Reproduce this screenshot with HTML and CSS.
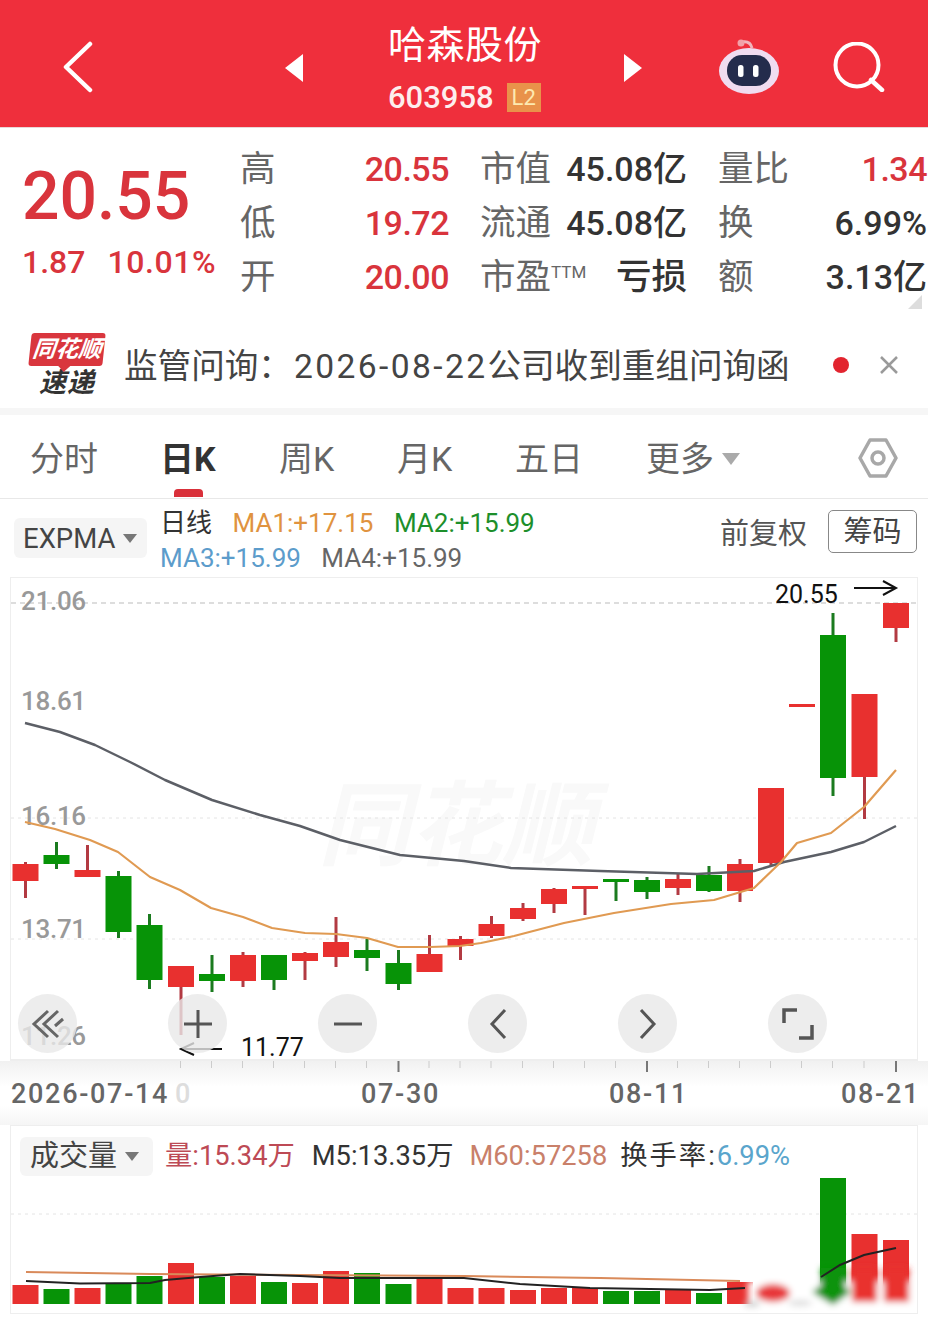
FILE: index.html
```html
<!DOCTYPE html>
<html lang="zh-CN">
<head>
    <meta charset="UTF-8">
    <meta name="viewport" content="width=device-width, initial-scale=1.0">
    <title>哈森股份 603958</title>
    <link rel="stylesheet" href="styles.css">
</head>
<body>
    <header class="topbar">
        <svg class="back" width="30" height="52" viewBox="0 0 30 52"><path d="M27 3 3 26l24 23" fill="none" stroke="#fff" stroke-width="4.500" stroke-linecap="round" stroke-linejoin="round"/></svg>
        <svg class="arrow-l" width="18" height="28" viewBox="0 0 18 28"><path d="M18 0v28L0 14z" fill="#fff"/></svg>
        <div class="stock">
            <div class="stock-name">哈森股份</div>
            <div class="stock-code">603958<span class="badge">L2</span></div>
        </div>
        <svg class="arrow-r" width="18" height="28" viewBox="0 0 18 28"><path d="M0 0v28l18-14z" fill="#fff"/></svg>
        <svg class="robot" width="62" height="56" viewBox="0 0 62 56">
            <path d="M24 3c6-1 9 2 10 6" fill="none" stroke="#f0b4bc" stroke-width="3"/>
            <circle cx="23" cy="4" r="3.500" fill="#f2a0a8"/>
            <ellipse cx="31" cy="32" rx="30" ry="23" fill="#f0dcf0"/>
            <rect x="9" y="16" width="44" height="31" rx="15" fill="#242c4c"/>
            <rect x="20" y="26" width="5.500" height="12" rx="2.500" fill="#fff"/>
            <rect x="35" y="26" width="5.500" height="12" rx="2.500" fill="#fff"/>
        </svg>
        <svg class="search" width="52" height="50" viewBox="0 0 52 50"><circle cx="24" cy="23" r="21.500" fill="none" stroke="#fff" stroke-width="4"/><path d="M38 38l11 10" stroke="#fff" stroke-width="4.500" stroke-linecap="round"/></svg>
    </header>

    <section class="quote">
        <div class="price-box">
            <div class="price">20.55</div>
            <div class="change"><span>1.87</span><span>10.01%</span></div>
        </div>
        <div class="stats">
            <div class="stat"><span class="label">高</span><span class="up">20.55</span></div>
            <div class="stat"><span class="label">市值</span><span>45.08亿</span></div>
            <div class="stat"><span class="label">量比</span><span class="up">1.34</span></div>
            <div class="stat"><span class="label">低</span><span class="up">19.72</span></div>
            <div class="stat"><span class="label">流通</span><span>45.08亿</span></div>
            <div class="stat"><span class="label">换</span><span>6.99%</span></div>
            <div class="stat"><span class="label">开</span><span class="up">20.00</span></div>
            <div class="stat"><span class="label">市盈<sup class="ttm">TTM</sup></span><span class="label-dark">亏损</span></div>
            <div class="stat"><span class="label">额</span><span>3.13亿</span></div>
        </div>
        <span class="corner"></span>
    </section>

    <section class="news">
        <div class="logo">
            <div class="logo-top">同花顺</div>
            <div class="logo-bottom">速递</div>
        </div>
        <div class="news-text">监管问询：<span class="news-date">2026-08-22</span>公司收到重组问询函</div>
        <span class="dot"></span>
        <svg class="close" width="20" height="20" viewBox="0 0 20 20"><path d="M2 2l16 16M18 2 2 18" stroke="#9a9a9a" stroke-width="2.500"/></svg>
    </section>

    <nav class="tabs">
        <span class="tab tab-first">分时</span>
        <span class="tab tab-active">日K</span>
        <span class="tab">周K</span>
        <span class="tab">月K</span>
        <span class="tab">五日</span>
        <span class="tab tab-more">更多<i class="caret caret-big"></i></span>
        <svg class="hex" width="40" height="44" viewBox="0 0 40 44"><path d="M12 4h16l10 18-10 18H12L2 22z" fill="none" stroke="#a8a8a8" stroke-width="3.500" stroke-linejoin="round"/><circle cx="20" cy="22" r="6" fill="none" stroke="#a8a8a8" stroke-width="3.500"/></svg>
    </nav>

    <section class="chart-head">
        <div class="select select-expma">EXPMA<i class="caret"></i></div>
        <div class="legend">
            <div class="legend-row"><span class="legend-title">日线</span><span class="c-orange">MA1:+17.15</span><span class="c-green">MA2:+15.99</span></div>
            <div class="legend-row"><span class="c-blue">MA3:+15.99</span><span class="c-gray">MA4:+15.99</span></div>
        </div>
        <span class="adjust">前复权</span>
        <span class="chips">筹码</span>
    </section>

    <section class="kline">
        <svg id="klineSvg" class="plot" width="906" height="482" viewBox="11 578 906 482">
            <text class="watermark" x="318" y="858">同花顺</text>
            <line class="grid-dash" x1="11" y1="603" x2="917" y2="603"/>
            <line class="grid-dot" x1="11" y1="818" x2="917" y2="818"/>
            <line class="grid-dot" x1="11" y1="939" x2="917" y2="939"/>
            <text class="axis-price" x="21" y="610">21.06</text>
            <text class="axis-price" x="21" y="710">18.61</text>
            <text class="axis-price" x="21" y="825">16.16</text>
            <text class="axis-price" x="21" y="938">13.71</text>
            <text class="axis-price" x="21" y="1045">11.26</text>
            <g id="candles"></g>
            <polyline class="line-gray" points="25,723 60,732 95,745 130,762 165,780 212,800 260,815 300,826 340,840 400,855 464,861 511,868 600,871 697,874 754,871 784,862 831,852 864,842 896,826"/>
            <polyline class="line-orange" points="25,822 55,829 90,840 118,852 150,877 180,890 211,908 243,917 272,928 305,933 336,934 367,938 398,947 430,947 460,946 481,943 514,936 564,923 614,913 671,904 714,900 754,888 781,862 797,843 831,833 864,807 896,770"/>
            <text class="note" x="775" y="603">20.55</text>
            <path class="note-arrow" d="M854 588h41M883 581l13 7-13 7"/>
            <text class="note" x="241" y="1056">11.77</text>
            <path class="note-arrow" d="M181 1049h41M194 1043l-13 6 13 6"/>
        </svg>
        <div class="tools">
            <span class="tool"><svg width="34" height="30" viewBox="0 0 34 30"><path d="M17 2 3 15l14 13M27 2 13 15l14 13M32 10 24 17" fill="none" stroke="#666" stroke-width="3"/></svg></span>
            <span class="tool"><svg width="30" height="30" viewBox="0 0 30 30"><path d="M1 15h28M15 1v28" stroke="#555" stroke-width="3"/></svg></span>
            <span class="tool"><svg width="30" height="30" viewBox="0 0 30 30"><path d="M1 15h28" stroke="#555" stroke-width="3"/></svg></span>
            <span class="tool"><svg width="18" height="32" viewBox="0 0 18 32"><path d="M16 2 3 16l13 14" fill="none" stroke="#555" stroke-width="3"/></svg></span>
            <span class="tool"><svg width="18" height="32" viewBox="0 0 18 32"><path d="M2 2l13 14L2 30" fill="none" stroke="#555" stroke-width="3"/></svg></span>
            <span class="tool"><svg width="34" height="34" viewBox="0 0 34 34"><path d="M16 3H3v13M18 31h13V18" fill="none" stroke="#555" stroke-width="3.500"/></svg></span>
        </div>
    </section>

    <section class="axis">
        <svg id="axisSvg" width="928" height="64" viewBox="0 1061 928 64">
            <g id="ticks"></g>
            <text class="axis-date" x="11" y="1103">2026-07-14</text>
            <text class="axis-date axis-faint" x="175" y="1103">0</text>
            <text class="axis-date" x="361" y="1103">07-30</text>
            <text class="axis-date" x="609" y="1103">08-11</text>
            <text class="axis-date" x="841" y="1103">08-21</text>
        </svg>
    </section>

    <section class="volume">
        <div class="volume-head">
            <div class="select select-volume">成交量<i class="caret"></i></div>
            <span class="c-rose">量:15.34万</span>
            <span class="c-dark">M5:13.35万</span>
            <span class="c-salmon">M60:57258</span>
            <span class="c-dark turnover">换手率:<span class="c-sky">6.99%</span></span>
        </div>
        <svg width="906" height="135" viewBox="11 1178 906 135">
            <defs><filter id="smear" x="-10%" y="-30%" width="120%" height="160%"><feGaussianBlur stdDeviation="3"/></filter></defs>
            <line class="grid-dot" x1="11" y1="1214" x2="917" y2="1214"/>
            <g id="bars"></g>
            <g filter="url(#smear)">
                <rect x="748" y="1281" width="169" height="30" fill="#fff"/>
                <ellipse cx="773" cy="1293" rx="17" ry="9" fill="#e8383a"/>
                <path d="M812 1292l21-15 18 15-18 13z" fill="#0e920e"/>
                <rect x="821" y="1268" width="24" height="24" fill="#079307"/>
                <rect x="852" y="1268" width="25" height="34" fill="#e9302f"/>
                <rect x="884" y="1268" width="25" height="34" fill="#e9302f"/>
                <ellipse cx="800" cy="1303" rx="12" ry="3" fill="#ddd"/>
                <ellipse cx="752" cy="1304" rx="8" ry="3" fill="#ccc"/>
            </g>
            <polyline class="vol-orange" points="26,1272 150,1274 300,1275 464,1276 600,1278 740,1281"/>
            <polyline class="vol-black" points="26,1281 80,1283.500 150,1283 165,1280 200,1277 240,1274 300,1276 340,1278 464,1278 520,1284 590,1288 650,1289 710,1290 745,1288"/>
            <polyline class="vol-black" points="821,1277 840,1265 864,1255 896,1248"/>
        </svg>
    </section>

    <script>
        // center x, body top, body bottom, wick top, wick bottom, red or green
        const candles = [
            [25.5, 864, 881, 862, 898, "r"], [56.5, 855, 864, 842, 869, "g"], [87.5, 870, 877, 845, 877, "r"],
            [118.5, 876, 932, 871, 938, "g"], [149.5, 925, 980, 914, 989, "g"], [181, 966, 987, 966, 1035, "r"],
            [212, 974, 981, 955, 992, "g"], [243, 955, 981, 952, 987, "r"], [274, 955, 980, 955, 990, "g"],
            [305, 953, 961, 952, 980, "r"], [336, 942, 957, 917, 967, "r"], [367, 950, 958, 939, 971, "g"],
            [398.5, 963, 984, 950, 990, "g"], [429.5, 954, 972, 935, 972, "r"], [460.5, 939, 946, 936, 960, "r"],
            [491.5, 924, 936, 916, 938, "r"], [523, 908, 919, 903, 921, "r"], [554, 889, 904, 888, 913, "r"],
            [585, 886, 889, 886, 915, "r"], [616, 879, 882, 879, 901, "g"], [647, 880, 892, 877, 899, "g"],
            [678, 879, 888, 874, 895, "r"], [709, 875, 891, 866, 892, "g"], [740, 864, 891, 859, 902, "r"],
            [771, 788, 863, 788, 865, "r"], [802, 704, 707, 704, 707, "r"], [833, 635, 778, 613, 796, "g"],
            [864.5, 694, 777, 694, 819, "r"], [896, 603, 628, 603, 642, "r"]
        ];

        // top of each volume bar, the baseline is 1304
        const volumes = [1285, 1289, 1288, 1283, 1276, 1263, 1277, 1276, 1282, 1283, 1271, 1273, 1284, 1277, 1288,
            1288, 1290, 1288, 1288, 1291, 1291, 1290, 1293, 1282, 1290, 1300, 1178, 1234, 1240];

        let candleHtml = "";
        let barHtml = "";
        let tickHtml = "";
        candles.forEach(function (c, i) {
            const color = c[5] === "r" ? "red" : "green";
            candleHtml += `<rect class="wick-${color}" x="${c[0] - 1.5}" y="${c[3]}" width="3" height="${c[4] - c[3]}"/>`;
            candleHtml += `<rect class="body-${color}" x="${c[0] - 13}" y="${c[1]}" width="26" height="${c[2] - c[1]}"/>`;
            barHtml += `<rect class="body-${color}" x="${c[0] - 13}" y="${volumes[i]}" width="26" height="${1304 - volumes[i]}"/>`;
            if (i >= 5) {
                const major = c[0] === 398.5 || c[0] === 647 || c[0] === 896;
                tickHtml += `<rect class="${major ? "tick-major" : "tick"}" x="${c[0] - 1}" y="1061" width="${major ? 2 : 1}" height="${major ? 11 : 7}"/>`;
            }
        });
        document.getElementById("candles").innerHTML = candleHtml;
        document.getElementById("bars").innerHTML = barHtml;
        document.getElementById("ticks").innerHTML = tickHtml;
    </script>
</body>
</html>
```

FILE: styles.css
```css
* { box-sizing: border-box; }
body { margin: 0; width: 928px; height: 1317px; overflow: hidden; background: #fff; color: #333; font-family: Roboto, "Noto Sans CJK SC", sans-serif; }
svg { display: block; }

/* top bar */
.topbar { display: flex; align-items: center; height: 128px; padding-left: 63px; background: #ef2f3c; border-bottom: 1px solid #e8d8d8; }
.back { margin-top: 6px; }
.arrow-l { margin: 8px 0 0 192px; }
.stock { width: 321px; padding-left: 85px; color: #fff; margin-top: 16px; }
.stock-name { font-size: 38px; line-height: 44px; letter-spacing: 0.500px; margin-top: -4px; }
.stock-code { display: flex; align-items: center; font-size: 31px; font-weight: 500; line-height: 38px; margin-top: 12px; color: #fdeeee; }
.badge { margin-left: 13px; width: 34px; height: 29px; background: #e9924a; color: #fde9b0; font-size: 22px; font-weight: 400; line-height: 29px; text-align: center; }
.arrow-r { margin-top: 8px; }
.robot { margin: 6px 0 0 76px; }
.search { margin: 7px 0 0 53px; }

/* quote block */
.quote { position: relative; display: flex; height: 197px; }
.price-box { width: 241px; padding: 29px 0 0 22px; color: #d9343c; }
.price { font-size: 66px; line-height: 80px; font-weight: 500; }
.change { display: flex; gap: 22px; font-size: 32px; font-weight: 500; line-height: 40px; margin-top: 5px; }
.change span:last-child { letter-spacing: 0.600px; }
.stats { display: grid; grid-template-columns: 208px 206px 208px; column-gap: 32px; grid-auto-rows: 54px; align-content: start; padding-top: 14px; }
.stat { display: flex; justify-content: space-between; font-size: 34px; line-height: 54px; color: #333; white-space: nowrap; font-weight: 500; }
.stat .label { color: #666; font-size: 35.500px; font-weight: 400; margin-left: -1px; }
.stat .label-dark { font-size: 35.500px; }
.stat .up { color: #d9343c; letter-spacing: -0.500px; }
.ttm { font-size: 17px; line-height: 0; vertical-align: 11px; }
.corner { position: absolute; right: 6px; top: 167px; border-style: solid; border-width: 0 0 14px 14px; border-color: transparent transparent #ddd transparent; }

/* news row */
.news { display: flex; align-items: center; height: 90px; border-bottom: 7px solid #f6f6f6; padding: 0 0 7px 30px; }
.logo { width: 74px; margin-top: 3px; font-style: italic; font-weight: 700; text-align: center; }
.logo-top { position: relative; height: 33px; background: #d9363e; border-radius: 3px; color: #fff; font-size: 23px; line-height: 33px; transform: skewX(-6deg); }
.logo-top::after { content: ""; position: absolute; left: 30px; bottom: -6px; border-style: solid; border-width: 6px 6px 0 6px; border-color: #d9363e transparent transparent transparent; }
.logo-bottom { color: #333; font-size: 27px; line-height: 28px; letter-spacing: 1px; margin-top: 3px; }
.news-text { margin-left: 20px; width: 709px; font-size: 33.600px; color: #444; white-space: nowrap; }
.news-date { letter-spacing: 2.400px; margin-left: 2px; }
.dot { width: 16px; height: 16px; margin-top: 3px; border-radius: 50%; background: #e2242f; }
.close { margin: 3px 0 0 30px; }

/* tabs */
.tabs { position: relative; display: flex; align-items: center; height: 84px; padding-left: 30px; border-bottom: 1px solid #e8e8e8; }
.tab { width: 118px; font-size: 34px; color: #666; white-space: nowrap; }
.tab-first { width: 130px; }
.tab-active { color: #333; font-weight: 700; position: relative; width: 119px; }
.tab-active::after { content: ""; position: absolute; left: 14px; bottom: -16px; width: 29px; height: 8px; border-radius: 4px 4px 0 0; background: #d9303a; }
.tab-more { width: 212px; margin-left: 13px; }
.hex { margin-top: 2px; }
.caret { display: inline-block; margin-left: 8px; vertical-align: middle; border-style: solid; border-width: 9px 7px 0 7px; border-color: #777 transparent transparent transparent; }
.caret-big { border-width: 12px 9px 0 9px; border-color: #aaa transparent transparent transparent; margin-top: -6px; }

/* chart header */
.chart-head { position: relative; display: flex; height: 78px; padding: 19px 0 0 14px; }
.select { display: flex; align-items: center; background: #f5f5f5; border-radius: 6px; color: #444; white-space: nowrap; }
.select-expma { width: 133px; height: 40px; padding-left: 9px; font-size: 27.500px; }
.legend { margin: -12px 0 0 13px; font-size: 26px; line-height: 35px; }
.legend-row { display: flex; gap: 20.500px; white-space: nowrap; }
.legend-title { color: #333; }
.c-orange { color: #e0933f; }
.c-green { color: #1d8f2b; }
.c-blue { color: #5c9ccb; }
.c-gray { color: #666; }
.adjust { position: absolute; left: 720px; top: 16px; font-size: 29px; line-height: 38px; color: #555; }
.chips { position: absolute; left: 828px; top: 11px; width: 89px; height: 43px; border: 1px solid #888; border-radius: 5px; font-size: 29px; line-height: 43px; text-align: center; color: #444; }

/* k line */
.kline { position: relative; width: 908px; height: 484px; margin-left: 10px; border: 1px solid #eee; border-bottom: 2px solid #eee; }
.plot { overflow: visible; }
.watermark { font-size: 92px; font-weight: 700; font-style: italic; fill: #f9f9f9; }
.grid-dash { stroke: #bbb; stroke-width: 1; stroke-dasharray: 5 4; }
.grid-dot { stroke: #e4e4e4; stroke-width: 1; stroke-dasharray: 3 4; }
.axis-price { font-size: 26px; font-weight: 500; letter-spacing: -0.300px; fill: #999; }
.body-red { fill: #e8302f; }
.body-green { fill: #079307; }
.wick-red { fill: #b23a42; }
.wick-green { fill: #1b7b1f; }
.line-gray { fill: none; stroke: #5c5f66; stroke-width: 2.500; stroke-linejoin: round; }
.line-orange { fill: none; stroke: #e09a52; stroke-width: 2.200; stroke-linejoin: round; }
.note { font-size: 25px; fill: #111; }
.note-arrow { fill: none; stroke: #111; stroke-width: 2; }
.tools { position: absolute; left: 7px; top: 416px; display: flex; gap: 91px; }
.tool { display: flex; align-items: center; justify-content: center; width: 59px; height: 59px; border-radius: 50%; background: rgba(232, 232, 232, 0.800); }

/* date axis */
.axis { height: 64px; background: linear-gradient(#f1f1f1, #fff 40%, #fff 70%, #f5f5f5); }
.tick { fill: #ccc; }
.tick-major { fill: #777; }
.axis-date { font-size: 27px; font-weight: 500; letter-spacing: 1.700px; fill: #666; }
.axis-faint { fill: #ddd; }

/* volume */
.volume { width: 908px; height: 189px; margin-left: 10px; border: 1px solid #eee; }
.volume-head { display: flex; align-items: center; gap: 17px; height: 52px; padding: 8px 0 0 9px; font-size: 27.300px; line-height: 36px; white-space: nowrap; }
.select-volume { width: 133px; height: 39px; margin-right: -5px; padding-left: 10px; font-size: 29px; }
.turnover { letter-spacing: 2px; margin-left: -4px; }
.c-rose { color: #bd4a55; }
.c-dark { color: #333; }
.c-salmon { color: #c9806a; margin-left: -1px; }
.c-sky { color: #5aa5cc; letter-spacing: 0; }
.vol-orange { fill: none; stroke: #d98a5a; stroke-width: 2; }
.vol-black { fill: none; stroke: #222; stroke-width: 2; }
```
